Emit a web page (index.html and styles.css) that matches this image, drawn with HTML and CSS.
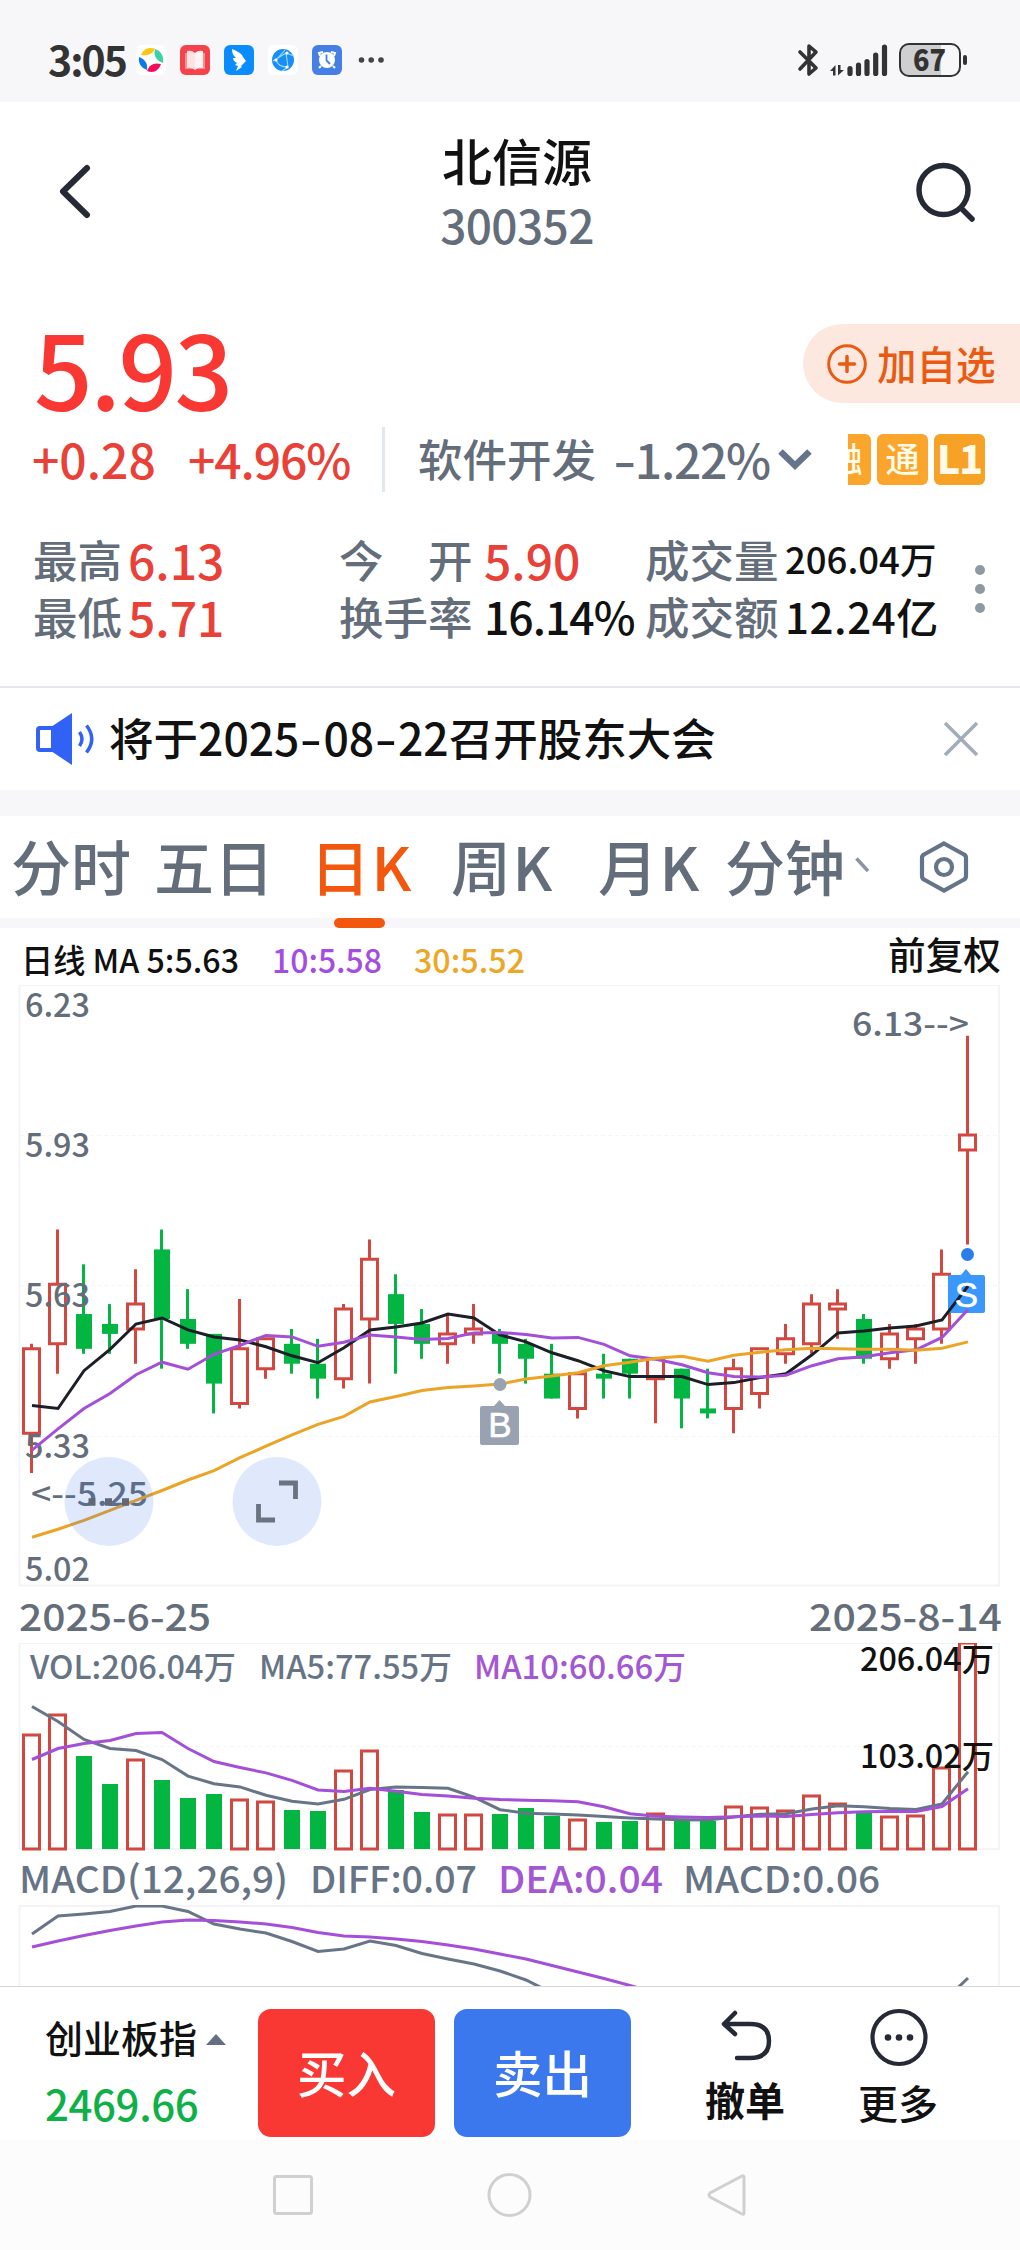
FILE: index.html
```
<!DOCTYPE html>
<html lang="zh-CN">
<head>
    <meta charset="UTF-8">
    <title>北信源 300352</title>
    <link rel="stylesheet" href="styles.css">
</head>
<body>
<div class="status">
    <span class="time">3:05</span>
    <div class="apps">
        <svg width="30" height="30" viewBox="0 0 30 30">
            <rect width="30" height="30" rx="6" fill="#fff"/>
            <path d="M5 10C8 3 13 2 19 3.5C17 9 12 11 5 10Z" fill="#fbc714"/>
            <path d="M19 4C25 6 28 11 27 18C21 16 17 11 19 4Z" fill="#3bd0a5"/>
            <path d="M25 19C22 27 17 28 11 26C13 20 18 17 25 19Z" fill="#f30d5c"/>
            <path d="M11 25C5 23 2 18 3 12C9 14 12 19 11 25Z" fill="#0d78ee"/>
        </svg>
        <svg width="30" height="30" viewBox="0 0 30 30">
            <rect width="30" height="30" rx="6" fill="#f6434b"/>
            <path d="M5 8H25V24H5Z" fill="#fa8d90"/>
            <path d="M7 6Q12 5 15 8V25Q12 22 7 23Z" fill="#ffe3e3"/>
            <path d="M23 6Q18 5 15 8V25Q18 22 23 23Z" fill="#fff3f3"/>
        </svg>
        <svg width="30" height="30" viewBox="0 0 30 30">
            <rect width="30" height="30" rx="6" fill="#0a8cff"/>
            <path d="M8 4Q18 8 19 12L22 16L17 21L18 22L12 26L14 21L11 20L13 18Q9 16 9 13L12 13Q8 10 8 4Z" fill="#fff"/>
        </svg>
        <svg width="30" height="30" viewBox="0 0 30 30">
            <rect width="30" height="30" rx="6" fill="#fff"/>
            <circle cx="15" cy="15" r="11" fill="#1c8df5"/>
            <path d="M5 16L18 8L20 22Q10 22 8 15L17 5M18 8L26 11M20 22L14 26" fill="none" stroke="#8fe0ff" stroke-width="1.1"/>
            <circle cx="8" cy="15" r="1.6" fill="#fff"/><circle cx="19" cy="8" r="1.6" fill="#fff"/><circle cx="19" cy="22" r="1.6" fill="#fff"/>
        </svg>
        <svg width="30" height="30" viewBox="0 0 30 30">
            <rect width="30" height="30" rx="6" fill="#457fe5"/>
            <path d="M8 11L7 8L11 7M22 11L23 8L19 7M9 21L7 23M21 21L23 23" stroke="#fff" stroke-width="2" fill="none"/>
            <circle cx="15" cy="15" r="8" fill="#fff"/>
            <path d="M14.500 9.500V15.500L18 19" stroke="#457fe5" stroke-width="1.800" fill="none"/>
        </svg>
        <svg width="32" height="30" viewBox="0 0 32 30">
            <g fill="#444"><circle cx="5.500" cy="15" r="2.800"/><circle cx="15.200" cy="15" r="2.800"/><circle cx="25" cy="15" r="2.800"/></g>
        </svg>
    </div>
    <svg class="signals" width="172" height="36" viewBox="797 41 172 36">
        <path d="M800 51L816 67L809 73V45L816 51L800 68" fill="none" stroke="#333" stroke-width="3.600" stroke-linejoin="round" stroke-linecap="round"/>
        <path d="M830 70L835.500 64V74.500H833V70ZM838 64H840.500V69H844L838 74.500Z" fill="#333"/>
        <g stroke="#333" stroke-width="5.200" stroke-linecap="round">
            <path d="M850 67.500V72.500M858.500 64V72.500M867 60.500V72.500M875.700 54V72.500M884.500 46V72.500"/>
        </g>
        <path d="M909 43H941V75H909A9 9 0 0 1 900 66V52A9 9 0 0 1 909 43Z" fill="#cfcfd1"/>
        <rect x="900" y="43" width="60" height="32" rx="9" fill="none" stroke="#333" stroke-width="2"/>
        <rect x="963" y="54" width="4" height="10" rx="2" fill="#333"/>
        <text class="battery" x="929.500" y="69.500" text-anchor="middle" textLength="33" lengthAdjust="spacingAndGlyphs">67</text>
    </svg>
</div>

<div class="header">
    <svg width="34" height="58" viewBox="0 0 34 58">
        <path d="M29 6L5 29.500L29 53" fill="none" stroke="#262a36" stroke-width="6" stroke-linecap="round" stroke-linejoin="round"/>
    </svg>
    <div class="title">
        <div class="name">北信源</div>
        <div class="code">300352</div>
    </div>
    <svg width="62" height="62" viewBox="0 0 62 62">
        <circle cx="27.500" cy="30" r="24.500" fill="none" stroke="#262a36" stroke-width="5.500"/>
        <path d="M46 49L56 59" stroke="#262a36" stroke-width="5.500" stroke-linecap="round"/>
    </svg>
</div>

<div class="quote">
    <div class="price-row">
        <span class="price">5.93</span>
        <div class="add">
            <svg width="40" height="40" viewBox="0 0 40 40">
                <circle cx="20" cy="20" r="18.300" fill="none" stroke="#e95a13" stroke-width="3"/>
                <path d="M20 12.500V27.500M12.500 20H27.500" stroke="#e95a13" stroke-width="3.500" stroke-linecap="round"/>
            </svg>
            <span>加自选</span>
        </div>
    </div>
    <div class="change-row">
        <span class="change">+0.28</span>
        <span class="percent">+4.96%</span>
        <div class="industry">
            <span>软件开发</span>
            <span class="rate"><i>-</i>1.22%</span>
            <svg width="34" height="24" viewBox="0 0 34 24">
                <path d="M2.500 3.500L17 17.500L31.500 3.500" fill="none" stroke="#64748b" stroke-width="6.500"/>
            </svg>
        </div>
        <div class="tags">
            <span>融</span><span>通</span><span class="level">L1</span>
        </div>
    </div>
    <div class="stats">
        <span>最高</span><b class="up">6.13</b>
        <span>今　开</span><b class="up">5.90</b>
        <span>成交量</span><b class="small">206.04万</b>
        <span>最低</span><b class="up">5.71</b>
        <span>换手率</span><b class="mid">16.14%</b>
        <span>成交额</span><b class="mid amount">12.24亿</b>
        <svg class="dots" width="12" height="50" viewBox="0 0 12 50">
            <g fill="#8e9aa1"><circle cx="6" cy="6" r="5"/><circle cx="6" cy="25" r="5"/><circle cx="6" cy="44" r="5"/></g>
        </svg>
    </div>
</div>

<div class="notice">
    <svg width="62" height="54" viewBox="0 0 62 54">
        <path d="M20 16H6Q4 16 4 18V36Q4 38 6 38H20" fill="none" stroke="#2f62f5" stroke-width="4"/>
        <path d="M17 15L38 1V53L17 39Z" fill="#2f62f5"/>
        <path d="M45.500 20Q50.500 27 45.500 34M52.500 13.500Q63 27 52.500 40.500" fill="none" stroke="#2f62f5" stroke-width="3.500"/>
    </svg>
    <p>将于<span>2025<i>-</i>08<i>-</i>22</span>召开股东大会</p>
    <svg width="36" height="36" viewBox="0 0 36 36">
        <path d="M2 2L34 34M34 2L2 34" stroke="#a3acba" stroke-width="3.500"/>
    </svg>
</div>

<ul class="tabs">
    <li>分时</li>
    <li>五日</li>
    <li class="selected k">日K</li>
    <li class="k">周K</li>
    <li class="k">月K</li>
    <li>分钟</li>
    <li class="tick"><svg width="14" height="18" viewBox="0 0 14 18"><path d="M1.500 1.500L13 14" stroke="#8a94a3" stroke-width="3.500"/></svg></li>
    <li class="setting">
        <svg width="50" height="54" viewBox="0 0 50 54">
            <path d="M25 3.500L45 14.500Q47 15.500 47 18V36Q47 38.500 45 39.500L25 50.500L5 39.500Q3 38.500 3 36V18Q3 15.500 5 14.500Z" fill="none" stroke="#64748b" stroke-width="4.200"/>
            <circle cx="25" cy="27" r="8" fill="none" stroke="#64748b" stroke-width="4.200"/>
        </svg>
    </li>
</ul>

<!-- K线 -->
<svg class="legend" width="1020" height="57" viewBox="0 928 1020 57">
    <text x="21" y="973" textLength="218" lengthAdjust="spacingAndGlyphs" font-size="33" fill="#111">日线 MA 5:5.63</text>
    <text x="272" y="973" textLength="110" lengthAdjust="spacingAndGlyphs" font-size="33" fill="#a44de0">10:5.58</text>
    <text x="414" y="973" textLength="111" lengthAdjust="spacingAndGlyphs" font-size="33" fill="#eba826">30:5.52</text>
    <text x="888" y="969" textLength="113" lengthAdjust="spacingAndGlyphs" font-size="38" fill="#111">前复权</text>
</svg>
<svg class="chart" width="1020" height="602" viewBox="0 0 1020 602">
    <rect class="frame" x="19.500" y="0" width="979.500" height="600.500"/>
    <path class="dash" d="M20 150.500H999M20 300.500H999M20 451.500H999"/>
    <g id="candles"></g>
    <g class="axis">
        <text x="25" y="31.500" textLength="65" lengthAdjust="spacingAndGlyphs">6.23</text>
        <text x="25" y="172" textLength="65" lengthAdjust="spacingAndGlyphs">5.93</text>
        <text x="25" y="322" textLength="65" lengthAdjust="spacingAndGlyphs">5.63</text>
        <text x="25" y="473" textLength="65" lengthAdjust="spacingAndGlyphs">5.33</text>
        <text x="25" y="596" textLength="65" lengthAdjust="spacingAndGlyphs">5.02</text>
        <text x="31" y="521" textLength="117" lengthAdjust="spacingAndGlyphs">&lt;--5.25</text>
        <text x="852" y="50.500" textLength="117" lengthAdjust="spacingAndGlyphs">6.13--&gt;</text>
    </g>
    <path d="M948 292Q948 290 950 290H961L966 284L971 290H983Q985 290 985 292V326Q985 328 983 328H950Q948 328 948 326Z" fill="#3a97fb"/>
    <g id="lines"></g>
    <circle cx="967.500" cy="269.500" r="6.500" fill="#2b7de9"/>
    <circle cx="500" cy="399.500" r="6.500" fill="#98a3b1"/>
    <path d="M480 423Q480 421 482 421H494L499.500 415L505 421H517Q519 421 519 423V458Q519 460 517 460H482Q480 460 480 458Z" fill="#98a2b1"/>
    <text class="mark" x="500" y="452">B</text>
    <text class="mark" x="966.500" y="322">S</text>
    <g fill="#3b78e8" fill-opacity=".16">
        <circle cx="109" cy="516.500" r="44.500"/>
        <circle cx="277" cy="516.500" r="44.500"/>
    </g>
    <path d="M88.500 517H95.500M105 517H112M122 517H129" stroke="#5f6876" stroke-width="7.500"/>
    <path d="M279 498H295.500V514M258.500 519V535H275" fill="none" stroke="#6b7280" stroke-width="4.800"/>
</svg>
<svg class="legend" width="1020" height="56" viewBox="0 1587 1020 56">
    <g fill="#646d7a" font-size="37">
        <text x="19" y="1631" textLength="192" lengthAdjust="spacingAndGlyphs">2025-6-25</text>
        <text x="809" y="1631" textLength="193" lengthAdjust="spacingAndGlyphs">2025-8-14</text>
    </g>
</svg>

<!-- 成交量 -->
<svg class="chart" width="1020" height="208" viewBox="0 0 1020 208">
    <rect class="frame" x="19.500" y="0" width="979.500" height="206"/>
    <path class="dash" d="M20 103.500H999"/>
    <g id="volumes"></g>
    <g id="volume-lines"></g>
    <g font-size="32">
        <text x="30" y="36" textLength="206" lengthAdjust="spacingAndGlyphs" fill="#667485">VOL:206.04万</text>
        <text x="259" y="36" textLength="193" lengthAdjust="spacingAndGlyphs" fill="#667485">MA5:77.55万</text>
        <text x="474" y="36" textLength="212" lengthAdjust="spacingAndGlyphs" fill="#a457d3">MA10:60.66万</text>
        <text x="860" y="28" textLength="134" lengthAdjust="spacingAndGlyphs" fill="#111">206.04万</text>
        <text x="860" y="125" textLength="134" lengthAdjust="spacingAndGlyphs" fill="#111">103.02万</text>
    </g>
</svg>

<!-- MACD -->
<svg class="legend" width="1020" height="54" viewBox="0 1851 1020 54">
    <g fill="#667485" font-size="37">
        <text x="19" y="1893" textLength="269" lengthAdjust="spacingAndGlyphs">MACD(12,26,9)</text>
        <text x="310" y="1893" textLength="167" lengthAdjust="spacingAndGlyphs">DIFF:0.07</text>
        <text x="498" y="1893" textLength="165" lengthAdjust="spacingAndGlyphs" fill="#a457d3">DEA:0.04</text>
        <text x="683" y="1893" textLength="197" lengthAdjust="spacingAndGlyphs">MACD:0.06</text>
    </g>
</svg>
<svg class="chart" width="1020" height="81" viewBox="0 0 1020 81">
    <path class="frame" d="M19.500 90V1H999V90"/>
    <g id="macd"></g>
</svg>

<div class="bottom">
    <div class="index">
        <div class="index-name">创业板指 <i></i></div>
        <div class="index-value">2469.66</div>
    </div>
    <div class="btn buy">买入</div>
    <div class="btn sell">卖出</div>
    <div class="tool">
        <svg width="60" height="60" viewBox="0 0 60 60">
            <path d="M20 6L9 17L20 27M9 17H35Q54 17 54 34Q54 51 35 51H22" fill="none" stroke="#262a36" stroke-width="4.500" stroke-linecap="round" stroke-linejoin="round"/>
        </svg>
        <span>撤单</span>
    </div>
    <div class="tool more">
        <svg width="60" height="60" viewBox="0 0 60 60">
            <circle cx="31" cy="30.500" r="26.500" fill="none" stroke="#262a36" stroke-width="4.200"/>
            <g fill="#262a36"><circle cx="20" cy="30.500" r="3.300"/><circle cx="31" cy="30.500" r="3.300"/><circle cx="42" cy="30.500" r="3.300"/></g>
        </svg>
        <span>更多</span>
    </div>
</div>
<div class="nav">
    <svg width="1020" height="110" viewBox="0 0 1020 110">
        <g fill="none" stroke="#d0d0d0" stroke-width="3">
            <rect x="274.500" y="36.500" width="37" height="37" rx="2"/>
            <circle cx="509.500" cy="55" r="20.500"/>
            <path d="M744 37V73Q744 75 742 74L710 57Q708 55 710 53L742 36Q744 35 744 37Z"/>
        </g>
    </svg>
</div>
<script src="chart.js"></script>
</body>
</html>
```
FILE: styles.css
```
* {
    margin: 0;
    padding: 0;
    box-sizing: border-box;
}

body {
    width: 1020px;
    height: 2250px;
    overflow: hidden;
    background: #fff;
    color: #111;
    font-family: "Noto Sans CJK SC", "Noto Sans", sans-serif;
    font-weight: 500;
    white-space: nowrap;
}

ul {
    list-style: none;
}

i, b {
    font-style: normal;
    font-weight: 500;
}

svg {
    display: block;
    flex: none;
}

/* 状态栏 */
.status {
    display: flex;
    align-items: center;
    height: 102px;
    padding: 18px 51px 0 48px;
    background: #f7f7fa;
}

.time {
    width: 88px;
    line-height: 60px;
    padding-bottom: 5px;
    color: #333;
    font-size: 41px;
    font-weight: 700;
    letter-spacing: -2px;
}

.apps {
    display: flex;
    gap: 14px;
}

.signals {
    margin-left: auto;
}

.battery {
    fill: #333;
    font-size: 30px;
    font-weight: 900;
}

/* 标题 */
.header {
    display: flex;
    align-items: center;
    justify-content: space-between;
    height: 178px;
    padding: 0 42px 0 58px;
}

.title {
    padding-left: 26px;
    text-align: center;
    line-height: 64px;
}

.name {
    font-size: 50px;
}

.code {
    padding-top: 1px;
    color: #646d7a;
    font-size: 46px;
    letter-spacing: -0.6px;
}

/* 行情 */
.quote {
    padding-top: 44px;
    height: 406px;
}

.price-row {
    display: flex;
    justify-content: space-between;
    height: 79px;
    padding-left: 34px;
}

.price {
    padding-top: 3px;
    line-height: 79px;
    color: #fa3833;
    font-size: 103px;
    letter-spacing: -2.5px;
}

.add {
    display: flex;
    align-items: center;
    gap: 10px;
    width: 217px;
    padding-left: 24px;
    border-radius: 40px 0 0 40px;
    background: #fde8df;
    color: #e95a13;
    font-size: 39.5px;
    line-height: 70px;
}

.add span {
    padding-bottom: 2px;
}

.change-row {
    display: flex;
    align-items: center;
    height: 65px;
    margin-top: 24px;
    padding-left: 32px;
    line-height: 60px;
    font-size: 48px;
}

.change {
    width: 156px;
}

.percent {
    width: 194px;
}

.change, .percent {
    padding-bottom: 4px;
    color: #e94138;
}

.percent {
    letter-spacing: -1.1px;
}

.industry {
    display: flex;
    align-items: center;
    width: 466px;
    height: 65px;
    padding-left: 33px;
    border-left: 3px solid #e3e7ee;
    color: #646d7a;
    font-size: 44.5px;
}

.industry span {
    padding-bottom: 4px;
}

.industry .rate {
    width: 164px;
    margin-left: 18px;
    font-size: 48px;
    letter-spacing: -1.3px;
}

.rate i {
    display: inline-block;
    transform: scaleX(1.35);
    margin: 0 3px 0 2px;
}

/* 标签从左侧被裁掉一部分 */
.tags {
    display: flex;
    justify-content: flex-end;
    gap: 6px;
    width: 137px;
    overflow: hidden;
}

.tags span {
    flex: none;
    width: 51px;
    height: 51px;
    border-radius: 6px;
    background: #fba52c;
    color: #fffbe8;
    font-size: 34px;
    line-height: 47px;
    text-align: center;
}

.tags .level {
    background: #f8a127;
    font-size: 39px;
    font-weight: 900;
    letter-spacing: -1px;
}

.stats {
    display: grid;
    grid-template-columns: 95px 211px 145px 161px 140px 190px;
    grid-template-rows: 57px 57px;
    align-items: center;
    position: relative;
    margin-top: 38px;
    padding-left: 33px;
    color: #646d7a;
    font-size: 44.5px;
    line-height: 57px;
}

.stats b {
    color: #111;
}

.stats .up {
    padding-top: 2px;
    color: #e94138;
    font-size: 48px;
}

.stats .small {
    font-size: 36.5px;
}

.stats .mid {
    font-size: 44.5px;
    letter-spacing: -1px;
}

.stats .amount {
    font-size: 42px;
    letter-spacing: 0.6px;
}

.dots {
    position: absolute;
    left: 974px;
    top: 34px;
}

/* 公告 */
.notice {
    display: flex;
    align-items: center;
    height: 104px;
    padding: 0 41px 0 34px;
    border-top: 2px solid #e5e7ee;
}

.notice p {
    margin: 0 auto 0 13px;
    padding-bottom: 5px;
    font-size: 44.5px;
}

.notice i {
    display: inline-block;
    margin: 0 4px;
    transform: scaleX(1.4);
}

/* 周期 */
.tabs {
    display: grid;
    grid-template-columns: 143px 156px 141px 147px 127px 130px 64px 60px;
    align-items: center;
    height: 138px;
    padding-left: 11px;
    border-top: 26px solid #f7f7fa;
    border-bottom: 10px solid #f7f7fa;
    color: #646d7a;
    font-size: 60px;
    line-height: 98px;
}

.tabs li {
    position: relative;
    height: 102px;
}

.tabs .k {
    letter-spacing: 1.5px;
}

.tabs .selected {
    color: #f2570d;
}

.tabs .selected::after {
    content: "";
    position: absolute;
    left: 24px;
    top: 102px;
    width: 51px;
    height: 10px;
    border-radius: 5px;
    background: #f2570d;
}

.tabs .tick {
    padding-top: 41px;
}

.tabs .setting {
    padding-top: 24px;
}

/* 图表 */
.chart, .legend {
    overflow: hidden;
}

.frame {
    fill: none;
    stroke: #f4f4f6;
    stroke-width: 2;
}

.dash {
    fill: none;
    stroke: #f5f5f5;
    stroke-width: 1;
    stroke-dasharray: 4 3;
}

.axis {
    fill: #646d7a;
    font-size: 32.5px;
}

.mark {
    fill: #fff;
    stroke: #fff;
    stroke-width: 0.6;
    font-family: "Liberation Sans", Arial, sans-serif;
    font-size: 35px;
    text-anchor: middle;
}

.up-shape {
    fill: none;
    stroke: #d2473f;
    stroke-width: 3;
}

.down-shape {
    fill: #03b642;
}

.line {
    fill: none;
    stroke-width: 3;
}

.black { stroke: #1c1e28; }
.purple { stroke: #a44fd8; }
.yellow { stroke: #eba426; }
.gray { stroke: #687587; }

/* 底部 */
.bottom {
    display: flex;
    height: 154px;
    padding-left: 45px;
    border-top: 1px solid #d5d9de;
}

.index {
    width: 213px;
    padding-top: 21px;
}

.index-name {
    font-size: 38px;
    line-height: 58px;
}

.index-name i {
    display: inline-block;
    margin: 0 0 8px 0;
    border: 10px solid transparent;
    border-top: 0;
    border-bottom: 11px solid #64707f;
}

.index-value {
    padding-top: 8px;
    color: #10b048;
    font-size: 42px;
    line-height: 58px;
    letter-spacing: -0.4px;
}

.btn {
    width: 177px;
    height: 128px;
    margin: 22px 19px 0 0;
    border-radius: 13px;
    color: #fff;
    font-size: 49.5px;
    line-height: 125px;
    text-align: center;
}

.buy {
    background: #fa3833;
}

.sell {
    background: #3c78ed;
}

.tool {
    display: flex;
    flex-direction: column;
    align-items: center;
    width: 80px;
    margin-left: 55px;
    padding-top: 20px;
    font-size: 40px;
    font-weight: 700;
    line-height: 60px;
}

.tool span {
    padding-top: 2px;
}

.more {
    margin-left: 73px;
    font-weight: 500;
}

.more span {
    padding-top: 5px;
}

.nav {
    height: 110px;
    background: #fcfcfc;
}
```
FILE: chart.js
```
// 最高, 开盘, 收盘, 最低, 成交量(万)
var days = [
    [5.51, 5.33, 5.50, 5.25, 114], [5.74, 5.51, 5.63, 5.45, 134], [5.67, 5.57, 5.50, 5.49, 93],
    [5.59, 5.55, 5.53, 5.49, 65], [5.66, 5.54, 5.59, 5.47, 89], [5.74, 5.70, 5.56, 5.46, 69],
    [5.62, 5.56, 5.51, 5.50, 51], [5.53, 5.53, 5.43, 5.37, 55], [5.60, 5.39, 5.50, 5.38, 49],
    [5.52, 5.46, 5.52, 5.44, 47], [5.54, 5.51, 5.47, 5.45, 39], [5.52, 5.47, 5.44, 5.40, 38],
    [5.59, 5.44, 5.58, 5.42, 78], [5.72, 5.56, 5.68, 5.43, 98], [5.65, 5.61, 5.55, 5.45, 59],
    [5.58, 5.55, 5.51, 5.48, 37], [5.57, 5.51, 5.53, 5.47, 34], [5.59, 5.53, 5.54, 5.51, 34],
    [5.54, 5.53, 5.51, 5.45, 35], [5.52, 5.51, 5.48, 5.43, 41], [5.51, 5.45, 5.40, 5.40, 33],
    [5.45, 5.38, 5.45, 5.36, 29], [5.49, 5.45, 5.44, 5.40, 27], [5.48, 5.48, 5.45, 5.40, 28],
    [5.48, 5.44, 5.48, 5.35, 35], [5.46, 5.46, 5.40, 5.34, 30], [5.46, 5.38, 5.37, 5.36, 28],
    [5.48, 5.38, 5.46, 5.33, 42], [5.50, 5.41, 5.50, 5.38, 41], [5.55, 5.49, 5.52, 5.47, 38],
    [5.61, 5.51, 5.59, 5.49, 53], [5.62, 5.58, 5.59, 5.52, 45], [5.57, 5.56, 5.48, 5.47, 37],
    [5.55, 5.48, 5.53, 5.46, 32], [5.55, 5.52, 5.54, 5.47, 33], [5.70, 5.54, 5.65, 5.51, 81],
    [6.13, 5.90, 5.93, 5.71, 206]
];

var ma30 = [5.121, 5.137, 5.155, 5.175, 5.195, 5.215, 5.236, 5.255, 5.281, 5.304, 5.327, 5.348, 5.364,
    5.393, 5.404, 5.416, 5.422, 5.425, 5.429, 5.439, 5.445, 5.452, 5.466, 5.473, 5.481, 5.485, 5.475,
    5.487, 5.493, 5.498, 5.501, 5.5, 5.499, 5.499, 5.497, 5.501, 5.514];
var diff = [29, 11, 9, 6.5, 1, 1, 6.5, 19, 24, 28, 36.5, 46.5, 44, 36, 40.5, 48.5, 54, 59, 66, 75, 88,
    100, 110, 120, 130, 140, 150, 150, 150, 150, 150, 140, 130, 120, 110, 98, 73];
var dea = [42, 36, 30.5, 25.5, 21, 17, 15, 15.5, 17, 19, 22.5, 27.5, 31, 32, 34, 36.5, 40, 44, 49, 54,
    60.5, 67, 73.5, 80.5, 88];

function px(i) {
    return 31.5 + i * 26;
}

function py(price) {
    return 1 + (6.23 - price) * 497;
}

function volY(v) {
    return 206.5 - v;
}

function same(y) {
    return y;
}

// 前几天没有足够的数据, 用 first 补上
function average(col, n, first) {
    var list = first.slice();
    for (var i = first.length; i < days.length; i++) {
        var sum = 0;
        for (var j = i - n + 1; j <= i; j++) {
            sum += days[j][col];
        }
        list.push(sum / n);
    }
    return list;
}

function line(list, toY, color) {
    var points = list.map(function (v, i) {
        return (px(i) + 0.5) + ',' + toY(v).toFixed(1);
    });
    return '<polyline class="line ' + color + '" points="' + points.join(' ') + '"/>';
}

var candles = '';
var volumes = '';
days.forEach(function (d, i) {
    var x = px(i);
    var up = d[2] >= d[1];
    var top = py(Math.max(d[1], d[2]));
    var bottom = py(Math.min(d[1], d[2]));
    if (up) {
        candles += '<path class="up-shape" d="M' + x + ' ' + py(d[0]) + 'V' + top +
            'M' + x + ' ' + bottom + 'V' + py(d[3]) +
            'M' + (x - 8) + ' ' + top + 'h16V' + bottom + 'h-16Z"/>';
        volumes += '<rect class="up-shape" x="' + (x - 8) + '" y="' + (volY(d[4]) - 0.5) +
            '" width="16" height="' + d[4] + '"/>';
    } else {
        candles += '<rect class="down-shape" x="' + (x - 1.5) + '" y="' + py(d[0]) +
            '" width="3" height="' + (py(d[3]) - py(d[0])) + '"/>' +
            '<rect class="down-shape" x="' + (x - 7.5) + '" y="' + top +
            '" width="16" height="' + (bottom - top) + '"/>';
        volumes += '<rect class="down-shape" x="' + (x - 7.5) + '" y="' + (volY(d[4]) - 0.5) +
            '" width="16" height="' + d[4] + '"/>';
    }
});

document.getElementById('candles').innerHTML = candles;
document.getElementById('volumes').innerHTML = volumes;
document.getElementById('lines').innerHTML =
    line(average(2, 5, [5.386, 5.380, 5.456, 5.499]), py, 'black') +
    line(average(2, 10, [5.296, 5.339, 5.380, 5.410, 5.448, 5.473, 5.459, 5.489, 5.507]), py, 'purple') +
    line(ma30, py, 'yellow');
document.getElementById('volume-lines').innerHTML =
    line(average(4, 5, [143, 128, 110, 101]), volY, 'gray') +
    line(average(4, 10, [90, 101, 106, 109, 116, 117, 101, 88, 82]), volY, 'purple');
document.getElementById('macd').innerHTML = line(diff, same, 'gray') + line(dea, same, 'purple');
```
